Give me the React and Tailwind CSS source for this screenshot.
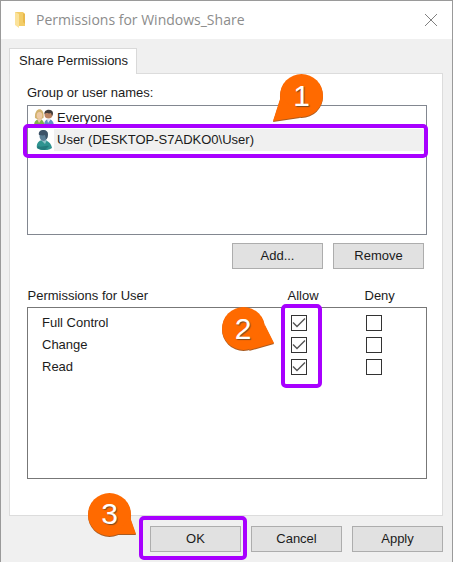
import React, { useState } from "react";
import clsx from "clsx";

const principals = [
  { id: "everyone", name: "Everyone", Icon: GroupIcon },
  { id: "user", name: "User (DESKTOP-S7ADKO0\\User)", Icon: UserIcon },
];

const App = () => {
  const [selected, setSelected] = useState("user");
  const [rights, setRights] = useState([
    { name: "Full Control", allow: true, deny: false },
    { name: "Change", allow: true, deny: false },
    { name: "Read", allow: true, deny: false },
  ]);

  const toggle = (index, key) => {
    setRights((prev) => prev.map((r, i) => (i === index ? { ...r, [key]: !r[key] } : r)));
  };

  return (
    <div className="min-h-screen flex flex-col border border-b-0 border-[#9a9a9a] bg-[#f0f0f0] font-['Liberation_Sans',Arial,sans-serif] text-[13px] leading-5 text-[#1b1b1b]">
      {/* Title bar */}
      <header className="h-[38px] flex items-center bg-white pl-[11px] pr-[13px]">
        <FolderIcon />
        <h1 className="flex-1 ml-2 font-['Open_Sans','Noto_Sans',sans-serif] text-[14px] text-[#8c8c8c]">
          Permissions for Windows_Share
        </h1>
        <button aria-label="Close" className="w-4 h-4 flex items-center justify-center">
          <svg width="14" height="14" viewBox="0 0 14 14" stroke="#808080" fill="none">
            <path d="M1 1l12 12M13 1L1 13" />
          </svg>
        </button>
      </header>

      <main className="flex flex-col pl-2 pr-[9px] pt-[9px] pb-[10px]">
        {/* Tab */}
        <div role="tablist" className="flex">
          <button
            role="tab"
            aria-selected="true"
            className="relative z-10 -mb-px h-[26px] pl-[9px] pr-2 pb-[2px] bg-white border border-b-0 border-[#d9d9d9]"
          >
            Share Permissions
          </button>
        </div>

        <section className="border border-[#dcdcdc] bg-white pl-[17px] pr-[15px] pt-[9px] pb-9">
          <h2 id="names">Group or user names:</h2>
          <ul role="listbox" aria-labelledby="names" className="mt-[2px] h-[130px] border border-[#828790] p-px">
            {principals.map(({ id, name, Icon }) => (
              <li
                key={id}
                role="option"
                aria-selected={selected === id}
                onClick={() => setSelected(id)}
                className="relative flex items-center h-[22px] pl-[5px]"
              >
                <Icon />
                <span className={clsx("flex-1 pl-[3px] leading-[22px]", selected === id && "bg-[#f0f0f0]")}>
                  {name}
                </span>
                {id === "user" && (
                  <>
                    <Highlight className="-left-[6px] -right-[3px] -top-[5px] -bottom-[7px]" />
                    <Callout number="1" tail="M1 22L-7 47L20 43Z" className="right-[102px] -top-[55px]" />
                  </>
                )}
              </li>
            ))}
          </ul>

          <div className="flex justify-end gap-[10px] mt-2 pr-[3px]">
            <PushButton>Add...</PushButton>
            <PushButton>Remove</PushButton>
          </div>

          <table className="w-full mt-[17px] table-fixed border-collapse text-left">
            <colgroup>
              <col />
              <col className="w-[77px]" />
              <col className="w-[62px]" />
            </colgroup>
            <thead>
              <tr className="h-[21px] align-top">
                <th className="font-normal">Permissions for User</th>
                <th className="font-normal">Allow</th>
                <th className="font-normal">Deny</th>
              </tr>
            </thead>
            <tbody className="border border-[#777]">
              <tr className="h-[5px]" />
              {rights.map((right, i) => (
                <tr key={right.name} className="h-[22px]">
                  <td className="pl-[14px]">{right.name}</td>
                  <td className="relative pl-[3px]">
                    <Check
                      label={`Allow ${right.name}`}
                      checked={right.allow}
                      onChange={() => toggle(i, "allow")}
                    />
                    {i === 0 && (
                      <>
                        <Highlight className="-left-[7px] -top-2 w-[41px] h-[84px]" />
                        <Callout number="2" tail="M43 18L52 36L27 43Z" className="-left-[66px] -top-[5px]" />
                      </>
                    )}
                  </td>
                  <td className="pl-px">
                    <Check
                      label={`Deny ${right.name}`}
                      checked={right.deny}
                      onChange={() => toggle(i, "deny")}
                    />
                  </td>
                </tr>
              ))}
              <tr className="h-[100px]" />
            </tbody>
          </table>
        </section>

        {/* Dialog buttons */}
        <footer className="flex justify-end gap-[10px] mt-[10px]">
          <div className="relative flex">
            <PushButton>OK</PushButton>
            <Highlight className="-left-[11px] -right-[6px] -top-[10px] -bottom-2" />
            <Callout number="3" tail="M42 24L48 41L28 41Z" className="-left-[62px] -top-[33px]" />
          </div>
          <PushButton>Cancel</PushButton>
          <PushButton>Apply</PushButton>
        </footer>
      </main>
    </div>
  );
};

const PushButton = ({ children }) => (
  <button className="w-[91px] h-[26px] border border-[#adadad] bg-[#e1e1e1] hover:bg-[#e5f1fb]">
    {children}
  </button>
);

const Check = ({ label, checked, onChange }) => (
  <label className="relative block w-4 h-4">
    <input
      type="checkbox"
      aria-label={label}
      checked={checked}
      onChange={onChange}
      className="block appearance-none w-4 h-4 border border-[#333] bg-white"
    />
    {checked && (
      <svg className="absolute inset-0" width="16" height="16" viewBox="0 0 16 16" fill="none" stroke="#555" strokeWidth="1.4">
        <path d="M2 7.500l4 4L14 3.500" />
      </svg>
    )}
  </label>
);

const Highlight = ({ className }) => (
  <div className={clsx("absolute z-10 border-4 border-[#a800ff] rounded-[5px] pointer-events-none", className)} />
);

const Callout = ({ number, tail, className }) => (
  <div
    className={clsx(
      "absolute z-20 w-[43px] h-[43px] flex items-center justify-center text-[30px] leading-none text-white pointer-events-none",
      className
    )}
  >
    <svg
      className="absolute inset-0 overflow-visible drop-shadow-[0_1px_0_#a85a20]"
      width="43"
      height="43"
      viewBox="0 0 43 43"
      fill="#ff6a00"
    >
      <circle cx="21.5" cy="21.5" r="21.5" />
      <path d={tail} />
    </svg>
    <span className="relative [text-shadow:1px_1px_1px_#7a4a20]">{number}</span>
  </div>
);

const FolderIcon = () => (
  <svg width="16" height="18" viewBox="0 0 16 18">
    <path d="M3 1h8l2 2v12H6z" fill="#f3cd68" />
    <path d="M3 1l4 2v14l-4-3z" fill="#fbe29a" />
    <path d="M11 2v9l2 2V3z" fill="#e9b94c" />
  </svg>
);

function GroupIcon() {
  return (
    <svg width="20" height="20" viewBox="0 0 20 20">
      <path d="M10 19c0-5 1-7 4-8 4 0 6 3 6 8z" fill="#5e92c4" />
      <path d="M13 11l1 4 3-4z" fill="#d8e6f2" />
      <circle cx="14.5" cy="6.5" r="4" fill="#b98262" />
      <path d="M10.500 6c-1-5 8-6 8.500-1 0 2-1 3-1 3l-1-3c-2 1-4 0-5 0z" fill="#3f3b3a" />
      <path d="M0 19c0-5 1-7 5-8 4 0 5 3 6 8z" fill="#83b24a" />
      <path d="M3 11l2 4 3-4z" fill="#e9c9a8" />
      <path d="M1 10c-1-11 10-12 8.500 0L7 11H3z" fill="#d2b26e" />
      <ellipse cx="5.500" cy="7.500" rx="2.800" ry="3.500" fill="#edc9a4" />
    </svg>
  );
}

function UserIcon() {
  return (
    <svg width="20" height="20" viewBox="0 0 20 20">
      <path d="M3 18c-1-4 1-7 5-8 6 0 9 3 10 8-4 3-11 3-15 0z" fill="#2f9490" />
      <path d="M7 10l4 4 2-4z" fill="#8fc4c8" />
      <path d="M4 16c3 2 7-1 11 0l-4 4c-4 0-6-1-8-2z" fill="#247b7c" />
      <ellipse cx="9.500" cy="6" rx="4" ry="5" fill="#5c7f96" />
      <path d="M5 5C3-1 14-2 14 4c0 3-1 5-2 5l-1-4c-2 1-4 0-6 0z" fill="#3d5368" />
    </svg>
  );
}

export default App;
